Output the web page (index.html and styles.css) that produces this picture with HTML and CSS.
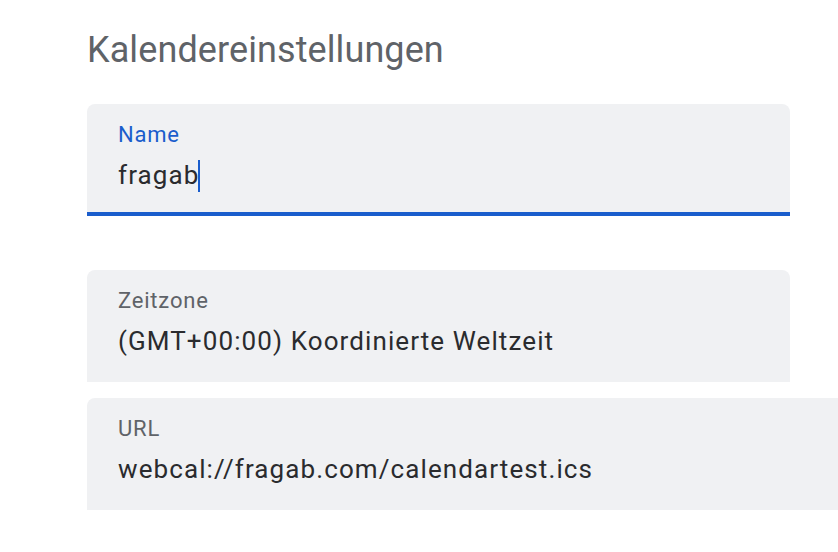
FILE: index.html
```
<!DOCTYPE html>
<html lang="de">
<head>
    <meta charset="UTF-8">
    <meta name="viewport" content="width=device-width, initial-scale=1.0">
    <title>Kalendereinstellungen</title>
    <link rel="stylesheet" href="styles.css">
</head>
<body>
    <div class="page">
        <h1 class="title">Kalendereinstellungen</h1>

        <div class="field field-active">
            <div class="field-label">Name</div>
            <div class="field-value">fragab<span class="cursor"></span></div>
        </div>

        <div class="field field-zone">
            <div class="field-label">Zeitzone</div>
            <div class="field-value">(GMT+00:00) Koordinierte Weltzeit</div>
        </div>

        <div class="field field-url">
            <div class="field-label">URL</div>
            <div class="field-value">webcal://fragab.com/calendartest.ics</div>
        </div>
    </div>
</body>
</html>
```

FILE: styles.css
```
html, body {
    margin: 0;
    background: #fff;
    font-family: Roboto, "Noto Sans", Arial, sans-serif;
    overflow: hidden;
}

.page {
    padding: 28px 0 0 87px;
}

.title {
    margin: 0 0 32px 0;
    font-size: 36px;
    line-height: 44px;
    font-weight: 400;
    letter-spacing: 0.1px;
    color: #5f6368;
}

.field {
    box-sizing: border-box;
    width: 703px;
    height: 112px;
    padding: 17px 31px 0 31px;
    background: #f0f1f3;
    border-radius: 8px 8px 0 0;
}

.field-label {
    font-size: 22px;
    line-height: 28px;
    letter-spacing: 0.8px;
    color: #5f6368;
}

.field-value {
    margin-top: 10px;
    font-size: 26px;
    line-height: 32px;
    letter-spacing: 1.1px;
    color: #2a2b2e;
}

/* Name field has focus */
.field-active {
    border-bottom: 4px solid #1a5dcc;
}

.field-active .field-label {
    color: #1a5dcc;
}

.cursor {
    display: inline-block;
    width: 2px;
    height: 32px;
    margin-left: -1px;
    background: #1a5dcc;
    vertical-align: -8px;
}

.field-zone {
    margin-top: 54px;
}

.field-url {
    margin-top: 16px;
    width: 780px;
}
```
